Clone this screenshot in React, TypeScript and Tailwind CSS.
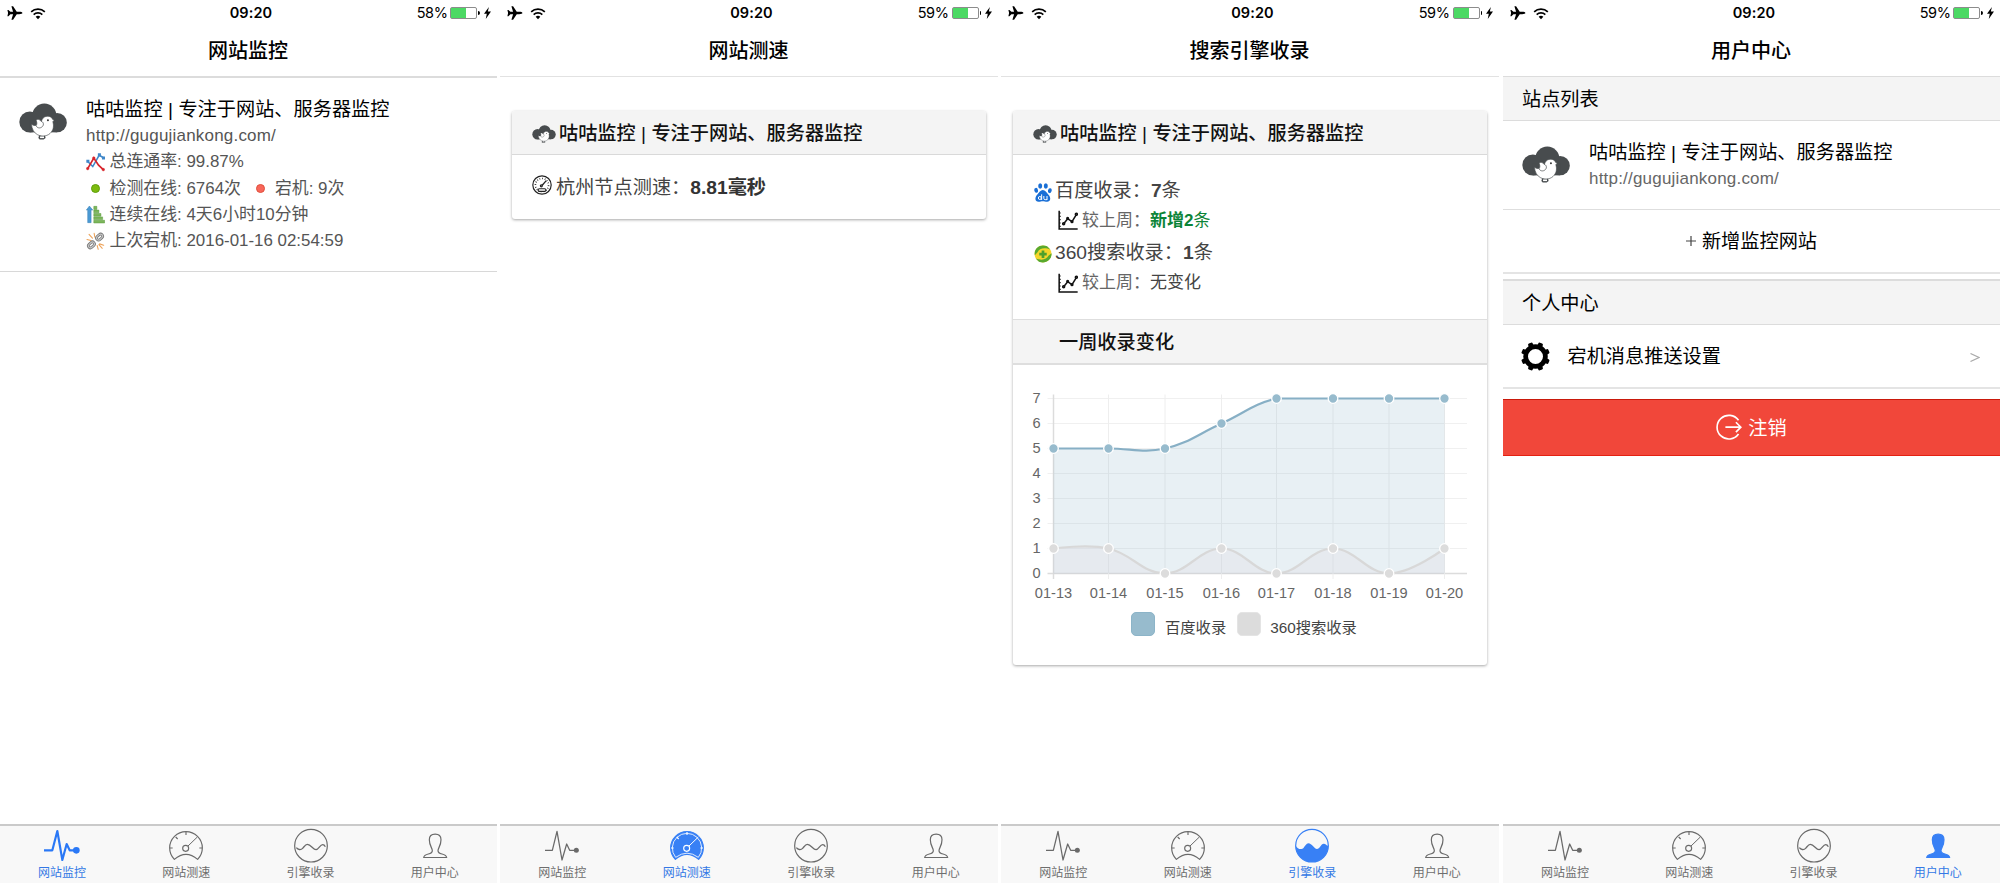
import React from "react";

type TabKey = "monitor" | "speed" | "index" | "user";

const SITE_TITLE = "咕咕监控 | 专注于网站、服务器监控";
const SITE_URL = "http://gugujiankong.com/";

function Logo({ className }: { className: string }) {
  return (
    <svg viewBox="57 38 146 111" className={className}>
      <g fill="#484c4e">
        <circle cx="134" cy="76" r="37" />
        <circle cx="90" cy="95" r="32" />
        <circle cx="173" cy="97" r="29.5" />
        <path d="M90 90H173V126.500H90Z" />
        <path d="M119 132h16l3 12-6 4h-12l-4-4z" />
      </g>
      <path
        d="M95 102C103 108 110 105 116 104C123 101 124 96 127 88C131 79 140 76 149 78C155 80 158 83 159 87L164 90L160 94C163 105 163 116 155 126C146 138 128 141 114 134C102 128 96 116 95 102Z"
        fill="#fff"
        stroke="#484c4e"
        strokeWidth="2"
      />
      <path d="M109 90C114 84 121 88 124 93C131 94 134 103 128 109C121 116 111 113 109 106C112 102 112 96 109 90Z" fill="#fff" stroke="#484c4e" strokeWidth="2.200" />
      <circle cx="145" cy="90" r="3" fill="#333" />
      <path d="M121 139h12v5h-12z" fill="#fff" />
    </svg>
  );
}

function StatusBar({ battery }: { battery: string }) {
  return (
    <div className="grid h-[26px] w-full grid-cols-3 items-center pl-[7px] pr-[6px] font-['Inter','Liberation_Sans',sans-serif] text-black">
      <div className="flex items-center">
        <svg viewBox="21 15 46 42" className="h-[14px] w-[15.500px]">
          <path
            d="M67 36C67 38 63 39.500 57 39.500H50L39 56H34L39 39.500H31L25 46H22L24 36L22 27H25L31 32.500H39L34 16H39L50 32.500H57C63 32.500 67 34 67 36Z"
            fill="#000"
          />
        </svg>
        <svg viewBox="88 15 48 39" className="ml-[7px] h-[13px] w-4">
          <g fill="none" stroke="#000" strokeWidth="5">
            <path d="M91.500 29.500A30 30 0 0 1 132.500 29.500" />
            <path d="M99 38A19 19 0 0 1 125 38" />
          </g>
          <path d="M105 44.500A10 10 0 0 1 119 44.500L112 52Z" fill="#000" />
        </svg>
      </div>
      <div className="pl-1 text-center text-[14.500px] font-semibold leading-[26px] tracking-[0.1px]">09:20</div>
      <div className="flex items-center justify-end">
        <span className="text-[14.500px] leading-[26px] tracking-[-0.4px]">{battery}</span>
        <span className="ml-[3px] flex h-3 w-[27px] rounded-[2px] border border-[#8c8c8c] bg-white">
          <span className="h-full w-[15px] bg-[#4cd964]" />
        </span>
        <span className="ml-px h-1 w-[1.500px] rounded-r-sm bg-black" />
        <svg viewBox="0 0 20 34" className="ml-1 h-3 w-[7px]">
          <path d="M14 0L0 19H8L5 34L20 13H11Z" fill="#000" />
        </svg>
      </div>
    </div>
  );
}

function PulseIcon({ active }: { active: boolean }) {
  return active ? (
    <svg viewBox="132 36 108 108" className="h-9 w-9">
      <path d="M132 106H157L172 48L187 135L200 87L209 106H224" fill="none" stroke="#2a78f6" strokeWidth="6.500" strokeLinejoin="round" />
      <circle cx="229" cy="106" r="10" fill="#2a78f6" />
    </svg>
  ) : (
    <svg viewBox="165 36 108 108" className="h-9 w-9">
      <path d="M168 106H190L204 49L219 135L233 87L242 106H256" fill="none" stroke="#6a6a6a" strokeWidth="3.800" strokeLinejoin="round" />
      <circle cx="262" cy="106" r="7.500" fill="#6a6a6a" />
    </svg>
  );
}

function GaugeIcon({ active }: { active: boolean }) {
  const line = active ? "#fff" : "#6a6a6a";
  return (
    <svg viewBox="505 36 108 108" className="h-9 w-9">
      <path
        d="M524 133A49 49 0 1 1 594 133Q559 103 524 133Z"
        fill={active ? "#3880f5" : "none"}
        stroke={active ? "#3880f5" : "#6a6a6a"}
        strokeWidth="3.600"
        strokeLinejoin="round"
      />
      {active && <path d="M525 127A44 44 0 1 1 593 127Q559 102 525 127Z" fill="none" stroke="#fff" strokeWidth="2.500" />}
      <g fill="none" stroke={line} strokeWidth="3.400">
        <path d="M511 99H519M599 99H607M559 51V60M528 66L534 72" />
        <path d="M593 66L565 93" strokeWidth="3" />
        <circle cx="558" cy="100" r="9" />
      </g>
    </svg>
  );
}

function WaveIcon({ active }: { active: boolean }) {
  const color = active ? "#3880f5" : "#6a6a6a";
  return (
    <svg viewBox="878 36 108 108" className="h-9 w-9">
      <circle cx="932" cy="92" r="49" fill="none" stroke={color} strokeWidth="3.600" />
      {active ? (
        <path
          d="M883 92C890 104 901 105 907 98C911 94 915 85 921 85C932 85 938 102 947 102C955 102 959 86 967 86C974 86 977 94 981 92A49 49 0 0 1 883 92Z"
          fill={color}
        />
      ) : (
        <path
          d="M888 98C893 104 901 106 907 100C911 96 915 88 921 88C932 88 938 104 947 104C955 104 959 89 967 89C971 89 973 91 975 95"
          fill="none"
          stroke={color}
          strokeWidth="3.800"
        />
      )}
    </svg>
  );
}

function PersonIcon({ active }: { active: boolean }) {
  return (
    <svg viewBox="1250 36 108 108" className="h-9 w-9">
      <path
        d="M1270 127.500C1271 121 1276 119 1284 117C1292 115 1296 113 1296 107C1296 99 1287 92 1287 74C1287 62 1294 57.500 1304.500 57.500C1315 57.500 1322 62 1322 74C1322 92 1313 99 1313 107C1313 113 1317 115 1325 117C1333 119 1338 121 1339 127.500Z"
        fill={active ? "#3880f5" : "none"}
        stroke={active ? "#3880f5" : "#6a6a6a"}
        strokeWidth="3.600"
        strokeLinejoin="round"
      />
    </svg>
  );
}

const TABS: { key: TabKey; label: string; Icon: React.FC<{ active: boolean }> }[] = [
  { key: "monitor", label: "网站监控", Icon: PulseIcon },
  { key: "speed", label: "网站测速", Icon: GaugeIcon },
  { key: "index", label: "引擎收录", Icon: WaveIcon },
  { key: "user", label: "用户中心", Icon: PersonIcon },
];

function TabBar({ active }: { active: TabKey }) {
  return (
    <nav className="grid h-[59px] grid-cols-4 border-t-2 border-[#cacaca] bg-[#f8f8f8]">
      {TABS.map(({ key, label, Icon }) => (
        <div key={key} className={"flex flex-col items-center pt-px " + (key === active ? "text-[#3478e5]" : "text-[#6e6e6e]")}>
          <Icon active={key === active} />
          <span className="mt-px text-[12px] leading-[18px]">{label}</span>
        </div>
      ))}
    </nav>
  );
}

function Phone({
  title,
  battery,
  active,
  className,
  children,
}: {
  title: string;
  battery: string;
  active: TabKey;
  className: string;
  children: React.ReactNode;
}) {
  return (
    <section className={"flex h-full flex-col bg-white " + className}>
      <StatusBar battery={battery} />
      <h1 className="h-[50px] pr-px text-center text-[20px] font-medium leading-[51px] text-black">{title}</h1>
      <main className="flex flex-1 flex-col">{children}</main>
      <TabBar active={active} />
    </section>
  );
}

function RateIcon() {
  return (
    <svg viewBox="260 454 56 56" className="h-[19px] w-[19px]">
      <g fill="#3f87c9" stroke="#3f87c9">
        <path d="M265 479L280 494L299 460L311 468" fill="none" strokeWidth="4.500" />
        <path d="M261 474h9v9h-9zM295 455h9v9h-9zM307 464h9v9h-9z" stroke="none" />
      </g>
      <g fill="#d8232a" stroke="#d8232a">
        <path d="M265 500L283 469L297 490L311 503" fill="none" strokeWidth="5" />
        <circle cx="265" cy="500" r="4" />
        <circle cx="283" cy="469" r="4" />
        <circle cx="311" cy="503" r="4" />
      </g>
    </svg>
  );
}

function Dot({ className }: { className: string }) {
  return <span className={"h-[9px] w-[9px] rounded-full border " + className} />;
}

function UptimeIcon() {
  return (
    <svg viewBox="260 612 56 56" className="h-[19px] w-[19px]">
      <path d="M270 615L280 627H275V664H265V627H261Z" fill="#4a9ad4" stroke="#3a80b8" strokeWidth="1.500" />
      <g fill="#7cb65a" stroke="#5b9a40" strokeWidth="1.500">
        <path d="M283 616h9v9h-9zM283 627h15v8h-15zM283 637h21v8h-21zM283 647h26v8h-26zM283 657h32v8h-32z" />
      </g>
    </svg>
  );
}

function BrokenLinkIcon() {
  return (
    <svg viewBox="260 692 56 56" className="h-[19px] w-[19px]">
      <g stroke="#eda35a" strokeWidth="3.200" strokeLinecap="round">
        <path d="M269 699L279 710M284 696L286 707M263 714L275 717M300 727L312 731M293 732L296 743M298 729L308 740" />
      </g>
      <g fill="none" stroke="#757575" strokeWidth="8">
        <rect x="-10" y="-6" width="20" height="12" rx="6" transform="translate(300 707) rotate(-43)" />
        <rect x="-10" y="-6" width="20" height="12" rx="6" transform="translate(276 730) rotate(-43)" />
      </g>
      <g fill="none" stroke="#c4c4c4" strokeWidth="3.500">
        <rect x="-10" y="-6" width="20" height="12" rx="6" transform="translate(300 707) rotate(-43)" />
        <rect x="-10" y="-6" width="20" height="12" rx="6" transform="translate(276 730) rotate(-43)" />
      </g>
    </svg>
  );
}

function StatRow({ icon, children }: { icon: React.ReactNode; children: React.ReactNode }) {
  return (
    <div className="flex h-[26.400px] items-center">
      <span className="flex w-[19px] justify-center">{icon}</span>
      <span className="ml-[4.500px] flex items-center text-[16.900px]">{children}</span>
    </div>
  );
}

function MonitorScreen() {
  return (
    <div className="flex h-[195.500px] border-b border-t-2 border-b-[#d8d8d8] border-t-[#dcdcdc] pl-[19px] pt-[18px]">
      <Logo className="mt-[6.500px] h-[37px] w-12" />
      <div className="ml-[19px] text-[17px] leading-[26px] text-[#555]">
        <div className="h-[27px] text-[19.200px] leading-[27px] text-black">{SITE_TITLE}</div>
        <div className="h-[26px] leading-[25px] tracking-[0.2px]">{SITE_URL}</div>
        <StatRow icon={<RateIcon />}>总连通率: 99.87%</StatRow>
        <StatRow icon={<Dot className="border-[#5f9d0c] bg-[#7cbb0f]" />}>
          <span>检测在线: 6764次</span>
          <Dot className="ml-[15px] mr-2.5 border-[#e0503c] bg-[#f8665a]" />
          <span>宕机: 9次</span>
        </StatRow>
        <StatRow icon={<UptimeIcon />}>连续在线: 4天6小时10分钟</StatRow>
        <StatRow icon={<BrokenLinkIcon />}>上次宕机: 2016-01-16 02:54:59</StatRow>
      </div>
    </div>
  );
}

function CardHeader() {
  return (
    <div className="flex h-11 items-center border-b border-[#d9d9d9] bg-[#f4f4f4] pl-5">
      <Logo className="mt-0.5 h-[18px] w-6" />
      <span className="ml-[3px] mt-0.5 text-[19.200px] font-medium leading-[44px] text-[#111]">{SITE_TITLE}</span>
    </div>
  );
}

function Card({ className, children }: { className: string; children: React.ReactNode }) {
  return (
    <div className={"mx-3 mt-[34px] overflow-hidden rounded-[3px] bg-white shadow-[0_1px_3px_rgba(0,0,0,0.35)] " + className}>{children}</div>
  );
}

function SpeedScreen() {
  return (
    <div className="border-t border-[#e2e2e2]">
      <Card className="h-[108px]">
        <CardHeader />
        <div className="flex items-center pl-5 pt-[15px]">
          <svg viewBox="125 524 60 61" className="-mt-1.5 h-5 w-5">
            <g fill="none" stroke="#222" strokeWidth="3.600">
              <circle cx="155" cy="554.500" r="28" />
              <circle cx="155" cy="554.500" r="20" strokeWidth="5" strokeDasharray="2.200 5.600" pathLength="126" transform="rotate(135 155 554.500)" />
              <path d="M155 556L168 541" strokeWidth="4" />
              <circle cx="153" cy="557" r="3" />
              <rect x="143" y="566" width="24" height="8" rx="4" fill="#fff" />
            </g>
          </svg>
          <span className="ml-1 text-[19.200px] leading-[36px] text-[#444]">
            杭州节点测速：<b className="font-bold text-[#333]">8.81毫秒</b>
          </span>
        </div>
      </Card>
    </div>
  );
}

function BaiduIcon() {
  return (
    <svg viewBox="101 367 53 57" className="h-[19px] w-[18px]">
      <g fill="#1a6fd6">
        <ellipse cx="119" cy="376" rx="6" ry="8" />
        <ellipse cx="136" cy="376" rx="6" ry="8" />
        <ellipse cx="107" cy="389" rx="5.500" ry="7.500" transform="rotate(-12 107 389)" />
        <ellipse cx="148" cy="390" rx="5.500" ry="7.500" transform="rotate(12 148 390)" />
        <path d="M127 388C134 388 138 396 144 402C152 410 151 423 140 423C134 423 132 421.500 127 421.500C122 421.500 120 423 114 423C103 423 102 410 110 402C116 396 120 388 127 388Z" />
      </g>
      <g fill="none" stroke="#fff" strokeWidth="3">
        <circle cx="118" cy="412" r="4.500" />
        <path d="M123.500 401V418M130 406V413Q130 417 134 417H139.500M139.500 406V418" />
      </g>
    </svg>
  );
}

function So360Icon() {
  return (
    <svg viewBox="101 556 52 53" className="h-[18px] w-[18px]">
      <circle cx="127" cy="582.500" r="25" fill="#f6d52a" />
      <path d="M103 586C99 564 121 551 139 560L149 570C132 562 116 566 111 577Z" fill="#58a92f" />
      <path d="M152 580C154 600 134 613 115 605L105 595C122 603 138 599 143 588Z" fill="#58a92f" />
      <path d="M123 572h8v7h7v8h-7v7h-8v-7h-7v-8h7z" fill="#4fa02c" />
    </svg>
  );
}

function TrendIcon() {
  return (
    <svg viewBox="176 449 60 60" className="h-5 w-5">
      <g fill="none" stroke="#111" strokeWidth="4.600">
        <path d="M179.500 451V506H235" />
        <path d="M184 458h-4M184 468h-4M184 478h-4M184 488h-4M184 498h-4" strokeWidth="3.500" />
        <path d="M193 490L205 475L218 484L231 463" />
        <circle cx="193" cy="490" r="3" />
        <circle cx="205" cy="474" r="2.500" />
        <circle cx="218" cy="484" r="2.500" />
        <circle cx="231" cy="462" r="3" />
      </g>
    </svg>
  );
}

const DATES = ["01-13", "01-14", "01-15", "01-16", "01-17", "01-18", "01-19", "01-20"];
const XS = [40.5, 95.5, 152, 208.5, 263.5, 320, 376, 431.5];
const BAIDU = [5, 5, 5, 6, 7, 7, 7, 7];
const SO360 = [1, 1, 0, 1, 0, 1, 0, 1];
const BASE = 208.5;
const STEP = 25;
const yOf = (v: number) => BASE - v * STEP;

function curve(values: number[]) {
  const pts = values.map((v, i) => ({ x: XS[i], y: yOf(v) }));
  const clamp = (y: number) => Math.min(BASE, Math.max(yOf(7), y));
  const ctl = pts.map((p, i) => {
    const a = pts[i - 1] ?? p;
    const b = pts[i + 1] ?? p;
    const edge = i === 0 || i === pts.length - 1;
    const d1 = Math.hypot(p.x - a.x, p.y - a.y);
    const d2 = Math.hypot(b.x - p.x, b.y - p.y);
    const t = edge ? 0 : 0.4;
    const f1 = (t * d1) / (d1 + d2);
    const f2 = (t * d2) / (d1 + d2);
    return {
      inn: { x: p.x - f1 * (b.x - a.x), y: clamp(p.y - f1 * (b.y - a.y)) },
      out: { x: p.x + f2 * (b.x - a.x), y: clamp(p.y + f2 * (b.y - a.y)) },
    };
  });
  return pts.reduce((d, p, i) => {
    if (i === 0) return `M${p.x} ${p.y}`;
    const o = ctl[i - 1].out;
    const n = ctl[i].inn;
    return `${d}C${o.x} ${o.y} ${n.x} ${n.y} ${p.x} ${p.y}`;
  }, "");
}

function Series({ values, color, line, fill }: { values: number[]; color: string; line: string; fill: string }) {
  const d = curve(values);
  return (
    <g>
      <path d={`${d}L${XS[7]} ${BASE}L${XS[0]} ${BASE}Z`} fill={fill} />
      <path d={d} fill="none" stroke={line} strokeWidth="2.200" />
      {values.map((v, i) => (
        <circle key={i} cx={XS[i]} cy={yOf(v)} r="4.800" fill={color} stroke="#fff" strokeWidth="1.300" />
      ))}
    </g>
  );
}

function WeekChart() {
  return (
    <svg viewBox="0 0 474 240" className="h-[240px] w-[474px] font-['Liberation_Sans',sans-serif] text-[14.600px]">
      {[0, 1, 2, 3, 4, 5, 6, 7].map((v) => (
        <g key={v}>
          <path d={`M34.500 ${yOf(v)}H454`} stroke={v === 0 ? "#dcdcdc" : "#f0f0f0"} strokeWidth={v === 0 ? 1.5 : 1} />
          <text x="27.500" y={yOf(v) + 4.5} textAnchor="end" fill="#666">
            {v}
          </text>
        </g>
      ))}
      {XS.map((x, i) => (
        <g key={x}>
          <path d={`M${x} 29.500V214`} stroke={i === 0 ? "#dcdcdc" : "#eeeeee"} strokeWidth={i === 0 ? 1.5 : 1} />
          <text x={x} y="232.500" textAnchor="middle" fill="#666">
            {DATES[i]}
          </text>
        </g>
      ))}
      <Series values={BAIDU} color="#97bbcd" line="#87afc5" fill="rgba(151,187,205,0.22)" />
      <Series values={SO360} color="#dcdcdc" line="#d8d8d8" fill="rgba(226,220,226,0.28)" />
    </svg>
  );
}

function IndexScreen() {
  return (
    <div className="border-t border-[#e2e2e2]">
      <Card className="h-[554px]">
        <CardHeader />
        <div className="h-[164px] pl-[21px] pt-5 text-[#444]">
          <div className="flex h-[31px] items-center">
            <span className="mt-[3px]">
              <BaiduIcon />
            </span>
            <span className="ml-[3px] text-[19.200px] leading-8">
              百度收录：<b>7</b>条
            </span>
          </div>
          <div className="flex h-7 items-center pl-[24px] text-[17px] leading-7 text-[#666]">
            <TrendIcon />
            <span className="ml-1 mt-px">
              较上周：<span className="font-bold text-[#0b8437]">新增2</span>
              <span className="text-[#0b8437]">条</span>
            </span>
          </div>
          <div className="flex h-[38px] items-center">
            <span className="mt-0.5">
              <So360Icon />
            </span>
            <span className="ml-[3px] text-[19.200px] leading-[38px]">
              360搜索收录：<b>1</b>条
            </span>
          </div>
          <div className="-mt-px flex h-6 items-center pl-[24px] text-[17px] leading-6 text-[#666]">
            <TrendIcon />
            <span className="ml-1">
              较上周：<span className="text-[#444]">无变化</span>
            </span>
          </div>
        </div>
        <div className="h-[46px] border-b-2 border-t border-[#dedede] bg-[#f4f4f4] pl-[46px] text-[19.200px] font-medium leading-[46px] text-[#111]">
          一周收录变化
        </div>
        <WeekChart />
        <div className="flex h-[38px] items-center pl-[118px] text-[15.300px] leading-6 text-[#444]">
          <span className="h-6 w-6 rounded-[5px] border border-[#8cb4c8] bg-[#97bbcd]" />
          <span className="ml-[10px] mt-[7px]">百度收录</span>
          <span className="ml-[11px] h-6 w-6 rounded-[5px] border border-[#e4e4e4] bg-[#dcdcdc]" />
          <span className="ml-[9px] mt-[7px]">360搜索收录</span>
        </div>
      </Card>
    </div>
  );
}

const GEAR_TEETH = [22.5, 67.5, 112.5, 157.5, 202.5, 247.5, 292.5, 337.5];

function UserScreen() {
  return (
    <div className="flex flex-col text-[19.200px] text-black">
      <div className="h-[45px] border-y border-[#dcdcdc] bg-[#f4f4f4] pl-[19px] leading-[46px]">站点列表</div>
      <div className="flex h-[89px] border-b border-[#dedede] pl-[19px] pt-[18px]">
        <Logo className="mt-[6.500px] h-[37px] w-12" />
        <div className="ml-[19px]">
          <div className="h-[27px] leading-[27px]">{SITE_TITLE}</div>
          <div className="text-[17px] leading-[25px] tracking-[0.2px] text-[#666]">{SITE_URL}</div>
        </div>
      </div>
      <div className="flex h-16 items-center justify-center border-b-2 border-[#e4e4e4]">
        <svg viewBox="0 0 10 10" className="mr-1.5 h-2.5 w-2.5">
          <path d="M5 0V10M0 5H10" stroke="#444" strokeWidth="1.200" />
        </svg>
        <span className="mt-0.5 leading-[60px]">新增监控网站</span>
      </div>
      <div className="mt-[5px] h-[46px] border-b border-t-2 border-[#dcdcdc] bg-[#f4f4f4] pl-[19px] leading-[46px]">个人中心</div>
      <div className="flex h-16 items-center border-b-2 border-[#e4e4e4] pl-[18px] pr-5">
        <svg viewBox="-44 -44 88 88" className="h-[29px] w-[29px]">
          <circle r="30" fill="none" stroke="#000" strokeWidth="14.500" />
          {GEAR_TEETH.map((a) => (
            <rect key={a} x="-7.500" y="-44" width="15" height="16" rx="4" transform={`rotate(${a})`} />
          ))}
        </svg>
        <span className="ml-[17.500px] mt-0.5 flex-1 leading-[60px]">宕机消息推送设置</span>
        <svg viewBox="0 0 10 9" className="mt-[3px] h-[9px] w-2.5">
          <path d="M0.500 0.500L9 4.500L0.500 8.500" fill="none" stroke="#aaa" strokeWidth="1.200" />
        </svg>
      </div>
      <div className="mt-2.5 flex h-[57px] items-center justify-center border-y border-b-[#e42112] border-t-[#c9190b] bg-[#f1473a] text-white">
        <svg viewBox="680 550 78 79" className="-mt-0.5 h-[26px] w-[26px]">
          <g fill="none" stroke="#fff" strokeWidth="5">
            <path d="M748 569A36 36 0 1 0 748 611" />
            <path d="M708 590H754M740 575L755 590L740 605" />
          </g>
        </svg>
        <span className="ml-[6px] mt-0.5 leading-[50px]">注销</span>
      </div>
    </div>
  );
}

export default function App() {
  return (
    <div className="flex h-[883px] w-[2000px] overflow-hidden whitespace-nowrap bg-white font-['Liberation_Sans','Noto_Sans_CJK_SC',sans-serif]">
      <Phone title="网站监控" battery="58%" active="monitor" className="w-[497px]">
        <MonitorScreen />
      </Phone>
      <Phone title="网站测速" battery="59%" active="speed" className="ml-[3px] w-[498px]">
        <SpeedScreen />
      </Phone>
      <Phone title="搜索引擎收录" battery="59%" active="index" className="ml-[3px] w-[498px]">
        <IndexScreen />
      </Phone>
      <Phone title="用户中心" battery="59%" active="user" className="ml-1 w-[497px]">
        <UserScreen />
      </Phone>
    </div>
  );
}
